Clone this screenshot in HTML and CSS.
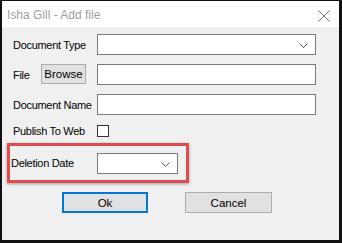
FILE: index.html
```html
<!DOCTYPE html>
<html>
<head>
<meta charset="utf-8">
<link rel="stylesheet" href="styles.css">
</head>
<body>
<div class="window">
  <div class="titlebar">
    <span class="title">Isha Gill - Add file</span>
    <svg class="close" width="12" height="12" viewBox="0 0 12 12"><path d="M0.5 0.5 L11.5 11.5 M11.5 0.5 L0.5 11.5" stroke="#7a7a7a" stroke-width="1" fill="none"/></svg>
  </div>
  <div class="content">
    <div class="row r1">
      <span class="label">Document Type</span>
      <div class="select wide"><svg class="chev" width="9" height="5" viewBox="0 0 9 5"><path d="M0.5 0.5 L4.5 4.5 L8.5 0.5" stroke="#555" stroke-width="1" fill="none"/></svg></div>
    </div>
    <div class="row r2">
      <span class="label short">File</span>
      <div class="browse">Browse</div>
      <div class="input wide"></div>
    </div>
    <div class="row r3">
      <span class="label">Document Name</span>
      <div class="input wide"></div>
    </div>
    <div class="row r4">
      <span class="label">Publish To Web</span>
      <div class="check"></div>
    </div>
    <div class="row highlight">
      <span class="label dl">Deletion Date</span>
      <div class="select narrow"><svg class="chev" width="9" height="5" viewBox="0 0 9 5"><path d="M0.5 0.5 L4.5 4.5 L8.5 0.5" stroke="#555" stroke-width="1" fill="none"/></svg></div>
    </div>
    <div class="buttons">
      <div class="btn ok">Ok</div>
      <div class="btn cancel">Cancel</div>
    </div>
  </div>
</div>
</body>
</html>
```
FILE: styles.css
```css
html, body {
  margin: 0;
  padding: 0;
  background: #f0f0f0;
}
body {
  font-family: "Liberation Sans", Arial, sans-serif;
  font-size: 11px;
  color: #000;
}
.window {
  box-sizing: border-box;
  width: 342px;
  height: 243px;
  border: 2px solid #111;
  border-top-width: 1px;
  border-right-width: 3px;
  border-bottom-width: 3px;
  background: #f0f0f0;
  display: flex;
  flex-direction: column;
}
.titlebar {
  height: 26px;
  background: #fff;
  display: flex;
  align-items: center;
  justify-content: space-between;
  padding: 0 9px 0 5px;
  flex: none;
}
.title {
  font-size: 12px;
  color: #a0a0a0;
  margin-top: 1px;
}
.close {
  display: block;
  margin-top: 3px;
}
.content {
  padding: 7px 0 0 11px;
  display: flex;
  flex-direction: column;
}
.row {
  display: flex;
  align-items: center;
}
.label {
  width: 84px;
  flex: none;
  letter-spacing: -0.3px;
}
.label.short {
  width: 28px;
}
.r2 { margin-top: 9px; }
.r3 { margin-top: 9px; }
.r4 { margin-top: 10px; height: 12px; }
.select, .input {
  box-sizing: border-box;
  height: 21px;
  background: #fff;
  border: 1px solid #7a7a7a;
  position: relative;
}
.wide { width: 219px; }
.narrow { width: 81px; }
.chev {
  position: absolute;
  right: 7px;
  top: 8px;
}
.browse {
  box-sizing: border-box;
  width: 45px;
  height: 20px;
  margin-right: 11px;
  background: #e1e1e1;
  border: 1px solid #adadad;
  display: flex;
  align-items: center;
  justify-content: center;
  font-size: 11.5px;
  margin-top: -1px;
}
.check {
  box-sizing: border-box;
  width: 12px;
  height: 12px;
  background: #fff;
  border: 1px solid #333;
}
.highlight {
  box-sizing: border-box;
  margin-left: -6px;
  margin-top: 6px;
  width: 182px;
  height: 40px;
  border: 3px solid #e04b4f;
  padding-left: 1px;
  box-shadow: 0 1px 3px rgba(0,0,0,0.35);
}
.label.dl {
  width: 86px;
}
.buttons {
  display: flex;
  gap: 37px;
  margin-top: 9px;
  padding-left: 49px;
}
.btn {
  box-sizing: border-box;
  height: 21px;
  background: #e1e1e1;
  border: 1px solid #adadad;
  display: flex;
  align-items: center;
  justify-content: center;
  font-size: 11.5px;
}
.ok {
  width: 86px;
  border: 2px solid #0078d7;
}
.cancel {
  width: 87px;
}
```
